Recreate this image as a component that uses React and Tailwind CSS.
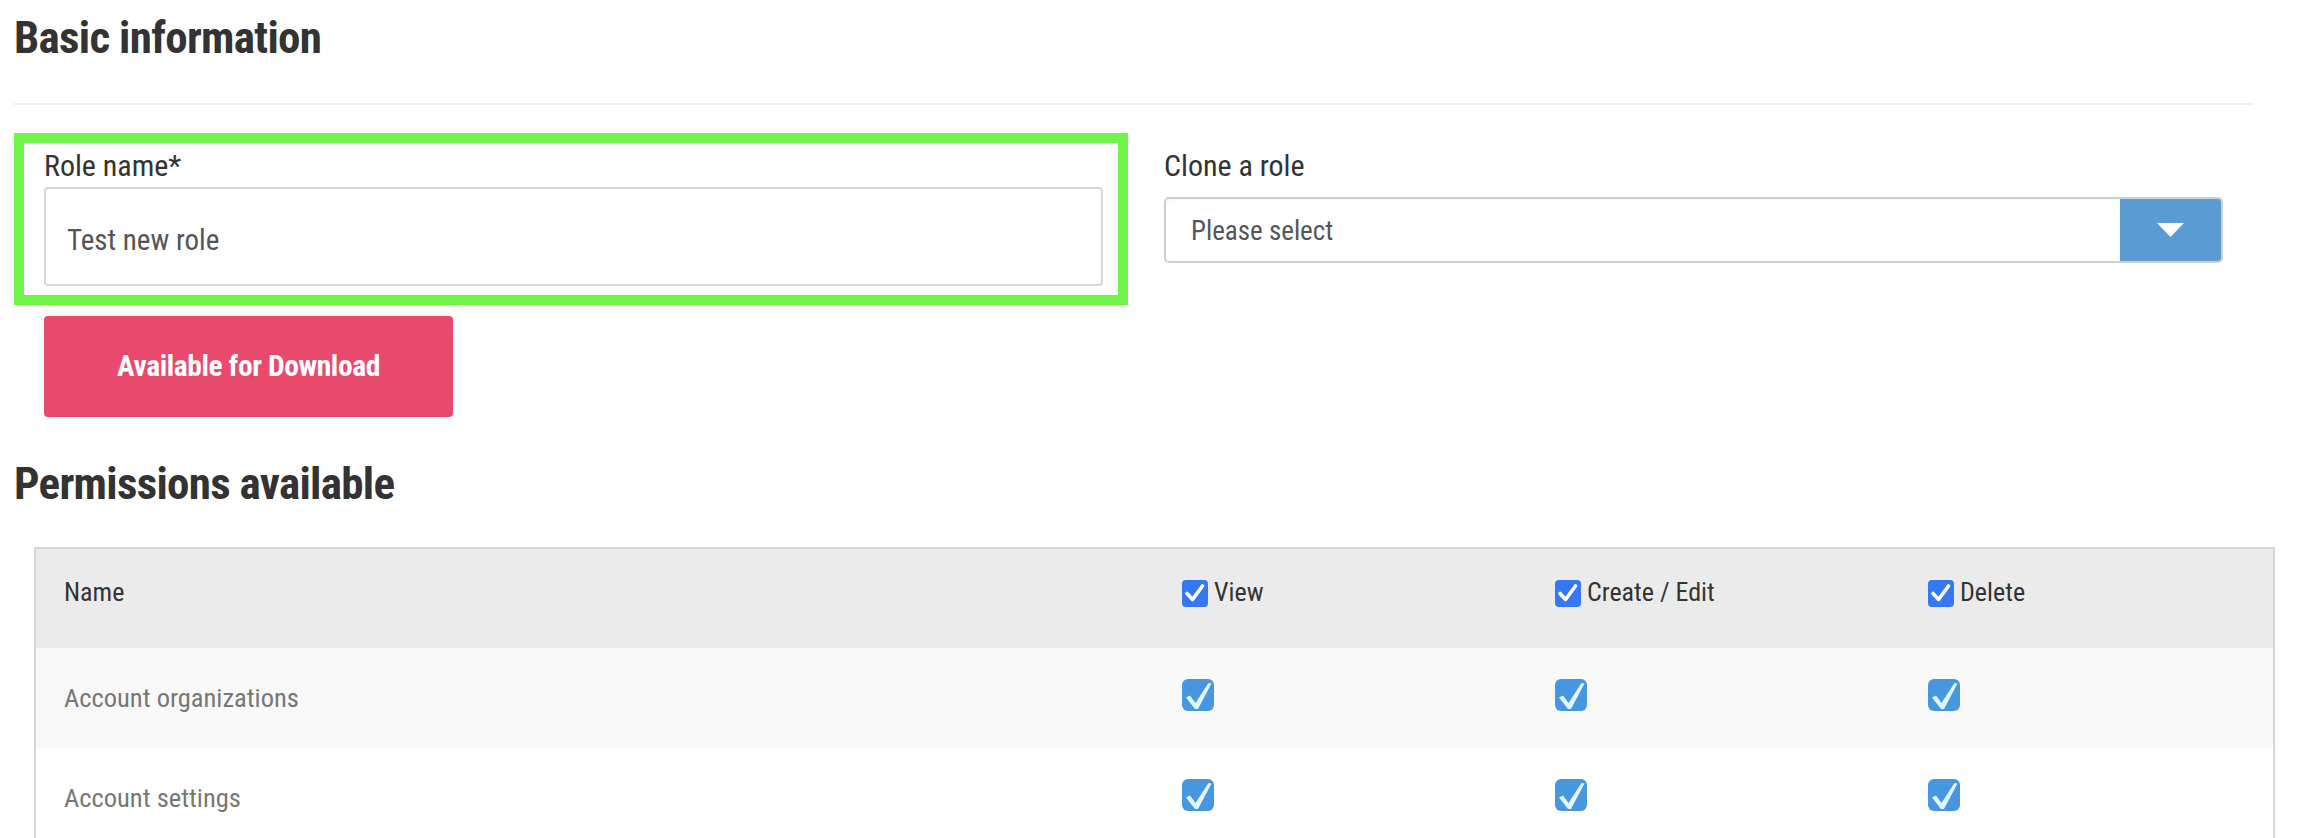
import React from "react";

function HeadCheck() {
  return (
    <svg width="26" height="27" viewBox="0 0 26 27" className="shrink-0 self-end mb-[1px]">
      <rect x="0" y="0" width="26" height="27" rx="4" fill="#3478f6" />
      <path d="M5 13.5 L10.5 19.5 L20.5 6" fill="none" stroke="#fff" strokeWidth="3.6" strokeLinecap="round" strokeLinejoin="round" />
    </svg>
  );
}

function RowCheck() {
  return (
    <svg width="32" height="32" viewBox="0 0 32 32" className="shrink-0">
      <rect width="32" height="32" rx="6" fill="#4797e0" />
      <path d="M4 18.5 L8 16.5 L13.5 24 L26.5 4 L29.5 4.5 L16 30 L13 30 Z" fill="#e2f4fc" />
    </svg>
  );
}

const perms = ["Account organizations", "Account settings"];

export default function App() {
  return (
    <div className="w-full min-h-screen bg-white font-['Roboto_Condensed','Liberation_Sans_Narrow','DejaVu_Sans_Condensed',sans-serif] overflow-hidden">
      <h1 className="ml-[14px] mt-[11px] text-[45px] leading-[54px] tracking-[-0.7px] font-bold text-[#333]">Basic information</h1>
      <div className="ml-[14px] mt-[38px] w-[2240px] h-[2px] bg-[#efefef]" />

      <div className="ml-[14px] mt-[28px] flex gap-[36px]">
        <div className="w-[1114px] border-[10px] border-[#72f54a] pl-[20px] pr-[15px] pt-[5px] pb-[9px]">
          <label className="block text-[30px] leading-[36px] text-[#333]">Role name*</label>
          <input
            defaultValue="Test new role"
            className="mt-[3px] block w-[1059px] h-[99px] border-2 border-[#d6d6d6] rounded-[4px] pl-[21px] pt-[6px] text-[29px] text-[#555] outline-none"
          />
        </div>
        <div className="w-[1059px] pt-[15px]">
          <label className="block text-[30px] leading-[36px] text-[#333]">Clone a role</label>
          <div className="mt-[13px] flex h-[66px] border-2 border-[#cfcfcf] rounded-[5px] overflow-hidden shadow-[inset_0_1px_2px_rgba(0,0,0,0.06)]">
            <div className="flex-1 flex items-center pl-[25px] pt-[2px] text-[27px] text-[#555]">Please select</div>
            <div className="w-[101px] bg-[#5a9bd3] flex items-center justify-center">
              <svg width="27" height="14" viewBox="0 0 27 14">
                <path d="M0 0 L27 0 L13.5 14 Z" fill="#fff" />
              </svg>
            </div>
          </div>
        </div>
      </div>

      <button className="ml-[44px] mt-[11px] w-[409px] h-[101px] rounded-[4px] bg-[#e9496a] text-white text-[29.5px] tracking-[-0.4px] font-bold flex items-center justify-center">
        Available for Download
      </button>

      <h2 className="ml-[14px] mt-[40px] text-[45px] leading-[54px] tracking-[-0.7px] font-bold text-[#333]">Permissions available</h2>

      <div className="ml-[34px] mt-[36px] w-[2241px] border-2 border-b-0 border-[#d6d6d6]">
        <div className="grid grid-cols-[1146px_373px_373px_1fr] h-[99px] bg-[#ebebeb] text-[26px] leading-[32px] text-[#333]">
          <div className="pl-[28px] pt-[27px]">Name</div>
          {["View", "Create / Edit", "Delete"].map((c) => (
            <div key={c} className="pt-[27px] flex items-start">
              <div className="flex gap-[6px] h-[32px]">
                <HeadCheck />
                <span>{c}</span>
              </div>
            </div>
          ))}
        </div>
        {perms.map((p, i) => (
          <div
            key={p}
            className={
              "grid grid-cols-[1146px_373px_373px_1fr] h-[100px] items-center text-[26.5px] leading-[32px] text-[#777] " +
              (i % 2 === 0 ? "bg-[#f8f8f8]" : "bg-white")
            }
          >
            <div className="pl-[28px]">{p}</div>
            {[0, 1, 2].map((k) => (
              <div key={k} className="flex pb-[6px]">
                <RowCheck />
              </div>
            ))}
          </div>
        ))}
      </div>
    </div>
  );
}
